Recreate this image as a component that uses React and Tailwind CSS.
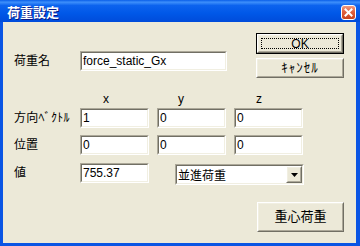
import React from "react";

const sunkenOuter =
  "border border-t-[#ACA899] border-l-[#ACA899] border-r-white border-b-white";
const sunkenInner =
  "h-full border border-t-[#716F64] border-l-[#716F64] border-r-[#F1EFE2] border-b-[#F1EFE2] bg-white flex items-center pl-[1px] overflow-hidden whitespace-nowrap";
const raisedOuter =
  "border border-t-white border-l-white border-r-[#716F64] border-b-[#716F64] bg-[#ECE9D8]";
const raisedInner =
  "h-full border border-t-[#F1EFE2] border-l-[#F1EFE2] border-r-[#ACA899] border-b-[#ACA899] flex items-center justify-center";

function Field({ value, className }) {
  return (
    <div className={sunkenOuter + " " + className}>
      <div className={sunkenInner}>{value}</div>
    </div>
  );
}

function Row({ label, values }) {
  return (
    <div className="flex items-center">
      <div className="w-[66px]">{label}</div>
      <Field value={values[0]} className="w-[69px] h-[20px]" />
      <Field value={values[1]} className="w-[69px] h-[20px] ml-[8px]" />
      <Field value={values[2]} className="w-[69px] h-[20px] ml-[8px]" />
    </div>
  );
}

export default function App() {
  return (
    <div className="w-[360px] h-[246px] bg-[#0A55E4] flex flex-col text-[12px] leading-[14px] text-black font-['Liberation_Sans','Noto_Sans_CJK_JP',sans-serif]">
      <div className="h-[22px] flex items-start pl-[7px] pr-[4px] bg-[linear-gradient(to_bottom,#0A5FE8_0%,#3D8FFB_10%,#0C63EE_25%,#0058E8_60%,#004BDA_100%)]">
        <span className="mt-[4px] text-white font-bold text-[13px] leading-[15px] [text-shadow:1px_1px_0_#0A1883] font-['Noto_Sans_CJK_JP',sans-serif]">
          荷重設定
        </span>
        <div className="ml-auto mt-[5px] w-[15px] h-[15px] rounded-[3px] border border-white bg-[linear-gradient(to_bottom,#EE9C82_0%,#E0603E_45%,#C8421C_100%)] flex items-center justify-center">
          <svg width="9" height="9" viewBox="0 0 9 9">
            <path d="M1.5 1.5 L7.5 7.5 M7.5 1.5 L1.5 7.5" stroke="white" strokeWidth="2" strokeLinecap="square" />
          </svg>
        </div>
      </div>
      <div className="flex-1 ml-[3px] mr-[4px] mb-[3px] bg-[#ECE9D8] pl-[11px] pt-[11px] pr-[12px] flex flex-col">
        <div className="flex items-start">
          <div className="w-[243px] pt-[18px] flex items-center">
            <div className="w-[66px]">荷重名</div>
            <Field value="force_static_Gx" className="w-[147px] h-[20px]" />
          </div>
          <div className="flex flex-col gap-[4px]">
            <div className="w-[88px] h-[21px] border border-black">
              <div className={raisedOuter + " h-full"}>
                <div className={raisedInner + " p-[2px]"}>
                  <div className="w-full h-full border border-dotted border-black flex items-center justify-center">
                    OK
                  </div>
                </div>
              </div>
            </div>
            <div className={raisedOuter + " w-[88px] h-[20px]"}>
              <div className={raisedInner + " tracking-[1px] text-[13px]"}>ｷｬﾝｾﾙ</div>
            </div>
          </div>
        </div>
        <div className="mt-[14px] h-[14px] flex">
          <div className="w-[66px]" />
          <div className="w-[69px] pl-[23px]">x</div>
          <div className="w-[69px] ml-[8px] pl-[21px]">y</div>
          <div className="w-[69px] ml-[8px] pl-[22px]">z</div>
        </div>
        <div className="mt-[2px]">
          <Row label={<span className="tracking-[0.3px]">方向ﾍﾞｸﾄﾙ</span>} values={["1", "0", "0"]} />
        </div>
        <div className="mt-[7px]">
          <Row label="位置" values={["0", "0", "0"]} />
        </div>
        <div className="mt-[8px] flex items-start">
          <div className="w-[66px] h-[20px] flex items-center">値</div>
          <Field value="755.37" className="w-[69px] h-[20px]" />
          <div className={sunkenOuter + " ml-[26px] mt-[1px] w-[129px] h-[21px]"}>
            <div className="h-full border border-t-[#716F64] border-l-[#716F64] border-r-[#F1EFE2] border-b-[#F1EFE2] bg-white flex items-center pl-[1px]">
              <span className="font-['Noto_Sans_CJK_JP',sans-serif]">並進荷重</span>
              <div className={raisedOuter + " ml-auto w-[16px] h-[17px]"}>
                <div className={raisedInner}>
                  <svg width="7" height="4" viewBox="0 0 7 4">
                    <path d="M0 0 H7 L3.5 4 Z" fill="black" />
                  </svg>
                </div>
              </div>
            </div>
          </div>
        </div>
        <div className="mt-[17px] flex justify-end">
          <div className={raisedOuter + " w-[87px] h-[30px]"}>
            <div className={raisedInner + " text-[13px]"}>重心荷重</div>
          </div>
        </div>
      </div>
    </div>
  );
}
